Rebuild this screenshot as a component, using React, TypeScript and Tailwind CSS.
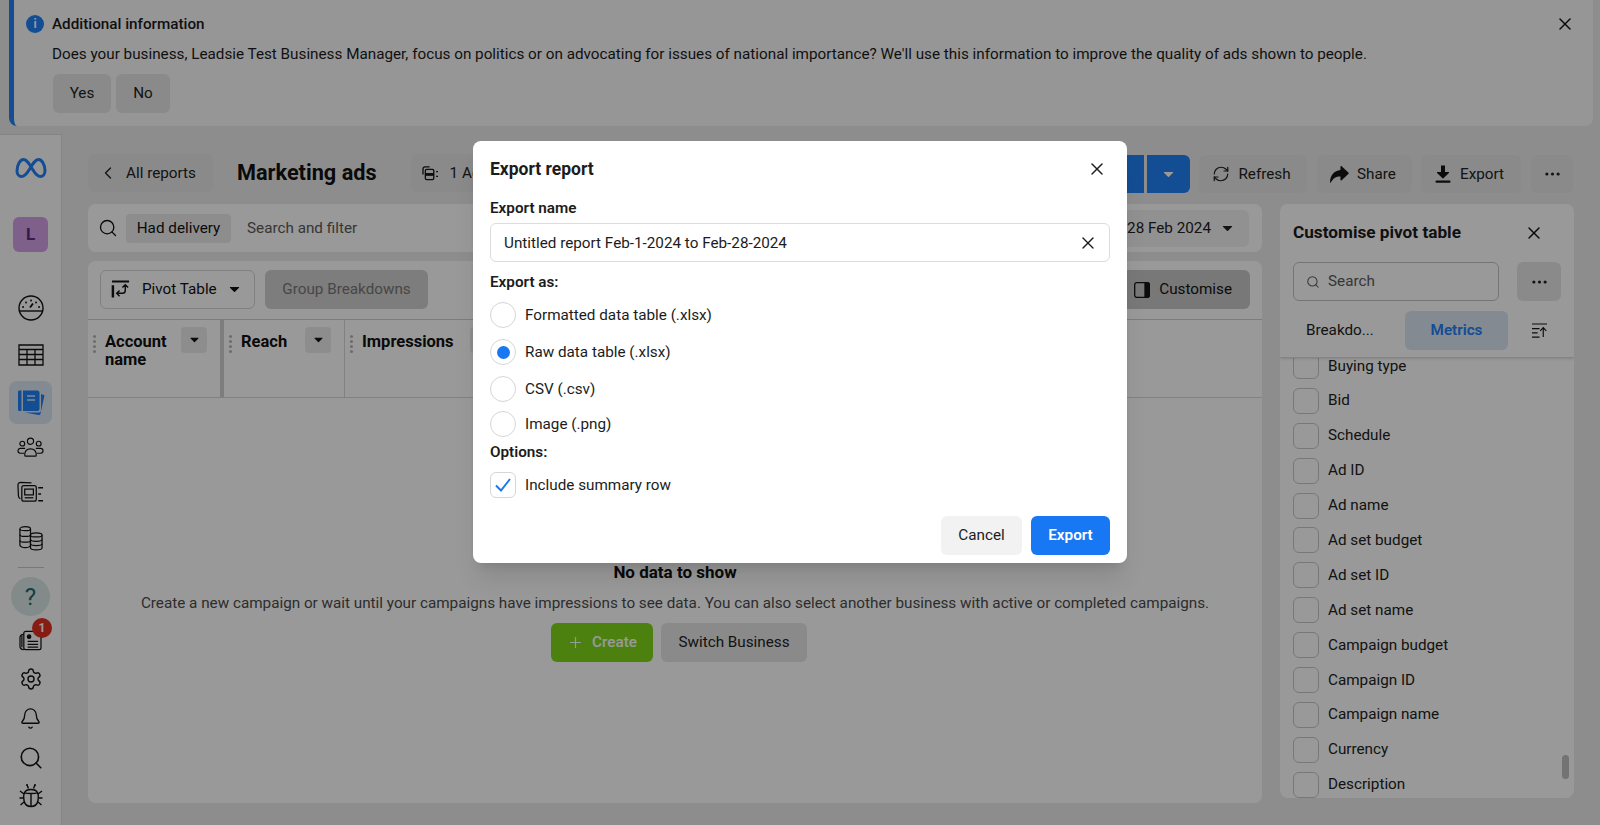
import { Bell, ChevronLeft, Plus, RefreshCw, Search, Settings, X } from "lucide-react";

const columns = [
  { label: ["Account", "name"], width: "w-[136px]", caret: true, thick: true },
  { label: ["Reach"], width: "w-[121px]", caret: true, thick: false },
  { label: ["Impressions"], width: "w-[165px]", caret: true, thick: false },
];

const metrics = [
  "Buying type",
  "Bid",
  "Schedule",
  "Ad ID",
  "Ad name",
  "Ad set budget",
  "Ad set ID",
  "Ad set name",
  "Campaign budget",
  "Campaign ID",
  "Campaign name",
  "Currency",
  "Description",
];

const exportTypes = [
  { label: "Formatted data table (.xlsx)", gap: "mt-[10px]", on: false },
  { label: "Raw data table (.xlsx)", gap: "mt-[11px]", on: true },
  { label: "CSV (.csv)", gap: "mt-[11px]", on: false },
  { label: "Image (.png)", gap: "mt-[9px]", on: false },
];

function Caret({ className = "" }: { className?: string }) {
  return (
    <svg viewBox="0 0 12 8" className={className} fill="currentColor">
      <path d="M1.2 1h9.6c.5 0 .8.6.4 1L6.6 6.6c-.3.4-.9.4-1.2 0L.8 2c-.4-.4-.1-1 .4-1z" />
    </svg>
  );
}

function Dots() {
  return (
    <svg viewBox="0 0 16 4" className="w-[15px] h-[4px]" fill="currentColor">
      <circle cx="2" cy="2" r="1.7" />
      <circle cx="8" cy="2" r="1.7" />
      <circle cx="14" cy="2" r="1.7" />
    </svg>
  );
}

function MetaLogo() {
  return (
    <svg viewBox="0 0 32 22" className="w-[32px] h-[22px]" fill="none" stroke="#2080f5" strokeWidth="3">
      <path d="M2 14C2 8 5 2.500 8.500 2.500 12 2.500 15 8 18 13c3 5 5 6.500 7.500 6.500S30 17 30 13.500C30 8 27 2.500 23.500 2.500 20 2.500 17 8 14 13c-3 5-5 6.500-7.500 6.500S2 17 2 14z" />
    </svg>
  );
}

function GaugeIcon() {
  return (
    <svg viewBox="0 0 26 26" className="w-[26px] h-[26px]" fill="none" stroke="#111" strokeWidth="1.400">
      <circle cx="13" cy="13" r="12" />
      <path d="M1.600 16h22.800" />
      <path d="M12 12.500l3-4" strokeWidth="1.800" />
      <path d="M5 12h.1M8 7.500h.1M13 5.500h.1M18 7.500h.1M21 12h.1" strokeWidth="1.800" strokeLinecap="round" />
    </svg>
  );
}

function TableIcon() {
  return (
    <svg viewBox="0 0 26 22" className="w-[26px] h-[22px]" fill="none" stroke="#111" strokeWidth="1.300">
      <path d="M1 1h24v20H1z" />
      <path d="M1 5.500h24M1 10.500h24M1 15.500h24M9 5.500V21M17 5.500V21" />
    </svg>
  );
}

function ReportsIcon() {
  return (
    <svg viewBox="0 0 28 28" className="w-[28px] h-[28px]">
      <path d="M24 5l3.500 1.200-4 18.500c-.2 1-1 1.500-2 1.300L8 23.500h14c1 0 2-1 2-2z" fill="#2080f5" />
      <path d="M1 3c0-1 .6-1.500 1.500-1.500H4.500V22h-2C1.600 22 1 21.500 1 20.500z" fill="#2080f5" />
      <path d="M6 1.500h14.500c1 0 2 1 2 2V20c0 1-1 2-2 2H6z" fill="#2080f5" />
      <path d="M10 7h8M10 11h8" stroke="#dde6f3" strokeWidth="1.500" />
    </svg>
  );
}

function PeopleIcon() {
  return (
    <svg viewBox="0 0 28 20" className="w-[27px] h-[20px]" fill="none" stroke="#111" strokeWidth="1.200">
      <circle cx="14" cy="4" r="3.200" />
      <circle cx="5.500" cy="6.500" r="2.500" />
      <circle cx="22.500" cy="6.500" r="2.500" />
      <path d="M8 18.500c0-4 2-6.500 6-6.500s6 2.500 6 6.500c0 .7-.5 1-1 1H9c-.5 0-1-.3-1-1z" />
      <path d="M8.500 11.500H3.500C2 11.500 1 12.500 1 14s1 2.500 2.500 2.500H7.500M19.500 11.500h5c1.500 0 2.500 1 2.500 2.500s-1 2.500-2.500 2.500H20.500" />
    </svg>
  );
}

function CardsIcon() {
  return (
    <svg viewBox="0 0 28 22" className="w-[27px] h-[22px]" fill="none" stroke="#111" strokeWidth="1.300">
      <path d="M15 1.500L4 1C2 1 1 2 1 4l.5 11c0 1.500.7 2.500 2 3" />
      <rect x="5" y="4.500" width="15" height="16" rx="2" />
      <rect x="8" y="8" width="9" height="6" />
      <path d="M8 17h9" />
      <path d="M22 6.500h5M22 13h3M22 20h5" strokeWidth="1.500" />
    </svg>
  );
}

function StacksIcon() {
  return (
    <svg viewBox="0 0 26 26" className="w-[25px] h-[25px]" fill="none" stroke="#111" strokeWidth="1.300">
      <path d="M2 3c0-3 11-3 11 0v17c0 1.500-3 2.500-5.500 2.500S2 21.500 2 20z" />
      <path d="M2 3c0 2.500 11 2.500 11 0M2 9c0 2.500 11 2.500 11 0M2 15c0 2.500 11 2.500 11 0" />
      <path d="M13 9.500c0-3 12-3 12 0v13c0 3-12 3-12 0z" fill="#fcfcfc" />
      <path d="M13 9.500c0 2.500 12 2.500 12 0M13 14c0 2.500 12 2.500 12 0M13 18.500c0 2.500 12 2.500 12 0" />
    </svg>
  );
}

function NewsIcon() {
  return (
    <svg viewBox="0 0 24 22" className="w-[23px] h-[21px]" fill="none" stroke="#111" strokeWidth="1.300">
      <rect x="5" y="1.500" width="18" height="19" rx="2" />
      <path d="M5 4.500C2.500 4.500 1 6 1 8v9c0 2 1.500 3.500 4 3.500M3 6v12" />
      <circle cx="10.500" cy="7" r="1.800" fill="#111" />
      <path d="M9 12h11M9 15h11M9 18h11" />
    </svg>
  );
}

function BugIcon() {
  return (
    <svg viewBox="0 0 24 24" className="w-[24px] h-[24px]" fill="none" stroke="#111" strokeWidth="1.400">
      <path d="M5.500 8.500c2-4 11-4 13 0 1 2 1 5.500.5 8-.7 3.500-3.500 6-7 6s-6.300-2.500-7-6c-.5-2.500-.5-6 .5-8z" />
      <path d="M5.500 8.800c3 1 10 1 13 0M12 9.500v13" />
      <path d="M8 1l1.500 3.500M16 1l-1.500 3.500M7 1h2M15 1h2M1 7l4 3M23 7l-4 3M.5 14h4M23.500 14h-4M1.500 21l3.500-3M22.500 21L19 18" />
    </svg>
  );
}

function ShareIcon() {
  return (
    <svg viewBox="0 0 20 18" className="w-[19px] h-[17px]" fill="#141414">
      <path d="M11 .8c0-.7.8-1 1.300-.6l7.300 6.900c.3.300.3.800 0 1.100l-7.300 6.900c-.5.400-1.300.1-1.300-.6v-3.500C6 11 3 13 .8 17.500.5 18 0 17.800 0 17.300 0 10 4.500 5 11 4.300z" />
    </svg>
  );
}

function DownloadIcon() {
  return (
    <svg viewBox="0 0 16 18" className="w-[16px] h-[18px]" fill="#141414">
      <path d="M6 .5h4V7h3.500c.5 0 .7.600.4 1L8.500 13.300c-.3.300-.7.300-1 0L2.100 8c-.3-.4-.1-1 .4-1H6z" />
      <rect x="0.500" y="15.500" width="15" height="2.200" rx="1" />
    </svg>
  );
}

function PivotIcon() {
  return (
    <svg viewBox="0 0 20 20" className="w-[19px] h-[19px]" fill="none" stroke="#141414" strokeWidth="1.500">
      <path d="M1 1.500h18" strokeWidth="2" />
      <path d="M2 5.500v13" strokeWidth="2.600" />
      <path d="M15 5v6c0 2-1 3-3 3H6.500M9 11l-3 3 3 3M12 8l3-3 3 3" />
    </svg>
  );
}

function PanelIcon() {
  return (
    <svg viewBox="0 0 16 16" className="w-[16px] h-[16px]" fill="none" stroke="#141414" strokeWidth="1.300">
      <rect x="0.700" y="0.700" width="14.600" height="14.600" rx="2" />
      <path d="M11 1h3a1.500 1.500 0 0 1 1.300 1.500v11A1.500 1.500 0 0 1 14 15h-3z" fill="#141414" />
    </svg>
  );
}

function SortIcon() {
  return (
    <svg viewBox="0 0 18 16" className="w-[17px] h-[15px]" fill="none" stroke="#141414" strokeWidth="1.200">
      <path d="M1 1h16M1 6h8M1 10.500h6M1 15h8M13 15V5M9.800 8.500L13 5l3.200 3.500" />
    </svg>
  );
}

function LayersIcon() {
  return (
    <svg viewBox="0 0 18 16" className="w-[17px] h-[15px]" fill="none" stroke="#141414" strokeWidth="1.400">
      <path d="M8 1H3C2 1 1 2 1 3v6" />
      <rect x="3.500" y="3.500" width="9" height="11" rx="1.500" />
      <path d="M3.500 9h9" strokeWidth="3" />
      <path d="M15 6h2M15 11h2" />
    </svg>
  );
}

function GrayButton({ children, className = "" }: { children: React.ReactNode; className?: string }) {
  return (
    <div className={`flex items-center justify-center rounded-[6px] bg-[#e6e6e6] text-[15.25px] text-[#222] ${className}`}>
      {children}
    </div>
  );
}

export default function App() {
  return (
    <div className="relative w-[1600px] h-[825px] overflow-hidden bg-[#ececec] font-['Roboto',sans-serif] text-[#111]">
      {/* Notice */}
      <div className="ml-[9px] w-[1584px] h-[126px] flex flex-col rounded-b-[8px] border-l-[5px] border-l-[#2080f5] bg-[#fafafa] pl-[38px] relative">
        <div className="absolute left-[12px] top-[15px] w-[18px] h-[18px] rounded-full bg-[#2080f5] flex items-center justify-center text-[12px] font-bold text-white">
          i
        </div>
        <div className="mt-[13px] h-[22px] flex items-center text-[15.25px] font-medium text-[#1c1c1c]">Additional information</div>
        <div className="mt-[8px] h-[22px] flex items-center text-[15.25px] text-[#1c1c1c]">
          Does your business, Leadsie Test Business Manager, focus on politics or on advocating for issues of national importance? We'll use this information to improve the quality of ads shown to people.
        </div>
        <div className="mt-[9px] ml-[1px] flex gap-[5px]">
          <GrayButton className="w-[58px] h-[39px]">Yes</GrayButton>
          <GrayButton className="w-[54px] h-[39px]">No</GrayButton>
        </div>
        <X className="absolute right-[18px] top-[14px] w-[20px] h-[20px] text-[#111]" strokeWidth={1.8} />
      </div>

      <div className="mt-[8px] flex h-[691px]">
        {/* Sidebar */}
        <aside className="w-[62px] shrink-0 border-r border-t border-[#dcdcdc] bg-[#fcfcfc] flex flex-col items-center">
          <div className="mt-[22px] h-[22px] flex items-center"><MetaLogo /></div>
          <div className="mt-[38px] w-[35px] h-[35px] rounded-[6px] bg-[#d4a0e8] flex items-center justify-center text-[17px] font-bold text-[#5b2a80]">L</div>
          <div className="mt-[43px] h-[26px] flex items-center"><GaugeIcon /></div>
          <div className="mt-[23px] h-[22px] flex items-center"><TableIcon /></div>
          <div className="mt-[15px] w-[43px] h-[43px] rounded-[8px] bg-[#dde6f3] flex items-center justify-center"><ReportsIcon /></div>
          <div className="mt-[13px] h-[20px] flex items-center"><PeopleIcon /></div>
          <div className="mt-[24px] h-[22px] flex items-center"><CardsIcon /></div>
          <div className="mt-[23px] h-[25px] flex items-center"><StacksIcon /></div>
          <div className="mt-[16px] w-[26px] h-px bg-[#c8c8c8]" />
          <div className="mt-[9px] w-[39px] h-[39px] rounded-full bg-[#d9e8e4] flex items-center justify-center text-[24px] text-[#1f6a70]">?</div>
          <div className="relative mt-[13px] h-[22px] flex items-center">
            <NewsIcon />
            <div className="absolute left-[13px] -top-[11px] w-[20px] h-[20px] rounded-full bg-[#e2301f] flex items-center justify-center text-[12px] font-bold text-white">1</div>
          </div>
          <Settings className="mt-[16px] w-[24px] h-[24px]" strokeWidth={1.4} color="#111" />
          <Bell className="mt-[16px] w-[23px] h-[23px]" strokeWidth={1.4} color="#111" />
          <Search className="mt-[15px] w-[26px] h-[26px]" strokeWidth={1.5} color="#111" />
          <div className="mt-[13px]"><BugIcon /></div>
        </aside>

        <main className="flex-1 min-w-0 pl-[26px] pr-[26px] pt-[20px] flex flex-col">
          {/* Top bar */}
          <div className="flex items-start h-[39px] mr-[1px]">
            <GrayButton className="w-[125px] h-[38px] !justify-start pl-[10px] gap-[8px]">
              <ChevronLeft className="w-[20px] h-[20px]" strokeWidth={1.6} />
              All reports
            </GrayButton>
            <div className="ml-[24px] h-[38px] flex items-center text-[21.7px] font-bold text-[#111]">Marketing ads</div>
            <GrayButton className="ml-[34px] w-[300px] h-[38px] gap-[11px] !justify-start pl-[11px]">
              <LayersIcon />1 Ad account
            </GrayButton>
            <div className="ml-auto mt-[1px] flex items-center">
              <div className="flex gap-[3px]">
                <div className="w-[80px] h-[38px] rounded-l-[6px] bg-[#2080f5]" />
                <div className="w-[43px] h-[38px] rounded-r-[6px] bg-[#2080f5] flex items-center justify-center text-white"><Caret className="w-[11px] h-[7px]" /></div>
              </div>
              <GrayButton className="ml-[9px] w-[108px] h-[38px] gap-[8px] pr-[3px]"><RefreshCw className="w-[18px] h-[18px]" strokeWidth={1.6} />Refresh</GrayButton>
              <GrayButton className="ml-[10px] w-[95px] h-[38px] gap-[8px] pr-[3px]"><ShareIcon />Share</GrayButton>
              <GrayButton className="ml-[9px] w-[100px] h-[38px] gap-[9px] pr-[3px]"><DownloadIcon />Export</GrayButton>
              <GrayButton className="ml-[10px] w-[42px] h-[38px]"><Dots /></GrayButton>
            </div>
          </div>

          <div className="mt-[11px] flex gap-[18px] flex-1 min-h-0">
            <div className="w-[1174px] flex flex-col gap-[9px] pb-[22px]">
              {/* Filter bar */}
              <div className="h-[48px] shrink-0 rounded-[8px] bg-white flex items-center pl-[10px] pr-[13px]">
                <Search className="w-[20px] h-[20px] mr-[8px]" strokeWidth={1.6} />
                <div className="h-[29px] w-[105px] rounded-[4px] bg-[#ececec] flex items-center justify-center text-[15.25px]">Had delivery</div>
                <div className="ml-[16px] text-[15.25px] text-[#5a5a5a]">Search and filter</div>
                <GrayButton className="ml-auto w-[300px] h-[37px] !justify-end gap-[11px] pr-[16px] !bg-[#f2f2f2]">
                  1 Feb 2024 - 28 Feb 2024
                  <Caret className="w-[11px] h-[7px]" />
                </GrayButton>
              </div>

              {/* Table */}
              <div className="flex-1 rounded-[8px] bg-[#f7f7f7] flex flex-col overflow-hidden">
                <div className="h-[59px] shrink-0 border-b border-[#cfcfcf] bg-white flex items-start pt-[9px] px-[12px]">
                  <div className="h-[39px] w-[155px] rounded-[6px] border border-[#d6d6d6] flex items-center pl-[10px] gap-[12px] text-[15.25px]">
                    <PivotIcon />
                    Pivot Table
                    <Caret className="w-[11px] h-[7px]" />
                  </div>
                  <div className="ml-[10px] h-[39px] w-[163px] rounded-[6px] bg-[#d0d0d0] flex items-center justify-center text-[15.25px] text-[#777]">Group Breakdowns</div>
                  <div className="ml-auto h-[39px] w-[136px] rounded-[6px] bg-[#c9c9c9] flex items-center justify-end pr-[18px] gap-[9px] text-[15.25px]">
                    <PanelIcon />
                    Customise
                  </div>
                </div>
                <div className="h-[78px] shrink-0 border-b border-[#d8d8d8] bg-white flex">
                  {columns.map((col) => (
                    <div key={col.label[0]} className={`${col.width} pl-[5px] relative flex items-start pt-[15px] ${col.thick ? "border-r-[4px] border-[#d0d0d0]" : "border-r border-[#d8d8d8]"}`}>
                      <div className="flex flex-col shrink-0">
                        <div className="w-[3px] h-[3px] rounded-full bg-[#b5b5b5]" />
                        <div className="w-[3px] h-[3px] rounded-full bg-[#b5b5b5] mt-[2px]" />
                        <div className="w-[3px] h-[3px] rounded-full bg-[#b5b5b5] mt-[2px]" />
                        <div className="w-[3px] h-[3px] rounded-full bg-[#b5b5b5] mt-[2px]" />
                      </div>
                      <div className="ml-[9px] text-[16.5px] font-bold leading-[18px] -mt-[2px]">
                        {col.label.map((line) => (
                          <div key={line}>{line}</div>
                        ))}
                      </div>
                      {col.caret && (
                        <div className="absolute right-[13px] top-[7px] w-[26px] h-[26px] rounded-[4px] bg-[#ececec] flex items-center justify-center">
                          <Caret className="w-[9px] h-[6px]" />
                        </div>
                      )}
                    </div>
                  ))}
                </div>
                {/* Empty state */}
                <div className="flex-1 flex flex-col items-center pt-[163px] bg-white">
                  <div className="h-[24px] flex items-center text-[17px] font-bold">No data to show</div>
                  <div className="mt-[7px] h-[22px] flex items-center text-[15.25px] text-[#4c4c4c]">
                    Create a new campaign or wait until your campaigns have impressions to see data. You can also select another business with active or completed campaigns.
                  </div>
                  <div className="mt-[9px] ml-[8px] flex gap-[8px]">
                    <div className="w-[102px] h-[39px] rounded-[6px] bg-[#80d81a] flex items-center justify-center gap-[8px] text-[15.25px] font-medium text-white">
                      <Plus className="w-[17px] h-[17px]" strokeWidth={1.6} />
                      Create
                    </div>
                    <GrayButton className="w-[146px] h-[39px]">Switch Business</GrayButton>
                  </div>
                </div>
              </div>
            </div>

            {/* Customise panel */}
            <div className="w-[294px] h-[594px] rounded-[8px] bg-white flex flex-col overflow-hidden relative">
              <div className="shrink-0 px-[13px] pt-[15px] pb-[7px] border-b border-[#dedede] shadow-sm relative bg-white">
                <div className="h-[28px] flex items-center justify-between">
                  <div className="text-[17.2px] font-bold text-[#1c1c1c]">Customise pivot table</div>
                  <X className="w-[20px] h-[20px] mr-[17px]" strokeWidth={1.7} />
                </div>
                <div className="mt-[15px] flex items-center">
                  <div className="w-[206px] h-[39px] rounded-[6px] border border-[#c4c4c4] flex items-center pl-[12px] gap-[8px] text-[15.25px] text-[#5a5a5a]">
                    <Search className="w-[14px] h-[14px]" strokeWidth={1.8} />
                    Search
                  </div>
                  <GrayButton className="ml-[18px] w-[44px] h-[39px]"><Dots /></GrayButton>
                </div>
                <div className="mt-[10px] flex items-center">
                  <div className="w-[112px] pl-[13px] text-[15.25px] text-[#222]">Breakdo...</div>
                  <div className="w-[103px] h-[39px] rounded-[6px] bg-[#dde6f3] flex items-center justify-center text-[15.25px] font-semibold text-[#2080f5]">Metrics</div>
                  <div className="ml-[23px]"><SortIcon /></div>
                </div>
              </div>
              <div className="flex-1 overflow-hidden px-[13px]">
                <div className="-mt-[5px] flex flex-col gap-[8.9px]">
                  {metrics.map((name) => (
                    <div key={name} className="flex items-center gap-[9px] h-[26px] shrink-0">
                      <div className="w-[26px] h-[26px] rounded-[6px] border border-[#c8c8c8]" />
                      <span className="text-[15.25px] text-[#222]">{name}</span>
                    </div>
                  ))}
                </div>
              </div>
              <div className="absolute right-[5px] top-[551px] w-[7px] h-[24px] rounded-full bg-[#c0c0c0]" />
            </div>
          </div>
        </main>
      </div>

      {/* Dim layer */}
      <div className="absolute inset-0 z-20 bg-black/40" />

      {/* Export dialog */}
      <div className="absolute z-30 left-[473px] top-[141px] w-[654px] h-[422px] rounded-[8px] bg-white shadow-xl px-[17px] pt-[14px] text-[#1c1c1c]">
        <div className="h-[28px] flex items-center justify-between">
          <div className="text-[17.5px] font-bold">Export report</div>
          <X className="w-[20px] h-[20px] mr-[3px]" strokeWidth={1.7} />
        </div>
        <div className="mt-[15px] h-[20px] flex items-center text-[15.25px] font-semibold">Export name</div>
        <div className="mt-[5px] h-[39px] rounded-[6px] border border-[#dcdcdc] flex items-center justify-between pl-[13px] pr-[11px] pt-[1px] text-[15.25px]">
          Untitled report Feb-1-2024 to Feb-28-2024
          <X className="w-[20px] h-[20px]" strokeWidth={1.6} />
        </div>
        <div className="mt-[10px] h-[20px] flex items-center text-[15.25px] font-semibold">Export as:</div>
        {exportTypes.map((type) => (
          <div key={type.label} className={`${type.gap} h-[26px] flex items-center gap-[9px] text-[15.25px]`}>
            <div className="w-[26px] h-[26px] rounded-full border border-[#d6d6d6] flex items-center justify-center">
              {type.on && <div className="w-[13px] h-[13px] rounded-full bg-[#1877f2]" />}
            </div>
            {type.label}
          </div>
        ))}
        <div className="mt-[5px] h-[20px] flex items-center text-[15.25px] font-semibold">Options:</div>
        <div className="mt-[10px] h-[26px] flex items-center gap-[9px] text-[15.25px]">
          <div className="w-[26px] h-[26px] rounded-[6px] border border-[#d6d6d6] flex items-center justify-center">
            <svg viewBox="0 0 16 14" className="w-[16px] h-[14px]" fill="none" stroke="#1877f2" strokeWidth="2">
              <path d="M1 7.500l5 5L15 1" />
            </svg>
          </div>
          Include summary row
        </div>
        <div className="mt-[18px] flex justify-end gap-[9px]">
          <div className="w-[81px] h-[39px] rounded-[6px] bg-[#f2f2f2] flex items-center justify-center text-[15.25px]">Cancel</div>
          <div className="w-[79px] h-[39px] rounded-[6px] bg-[#1877f2] flex items-center justify-center text-[15.25px] font-semibold text-white">Export</div>
        </div>
      </div>
    </div>
  );
}
